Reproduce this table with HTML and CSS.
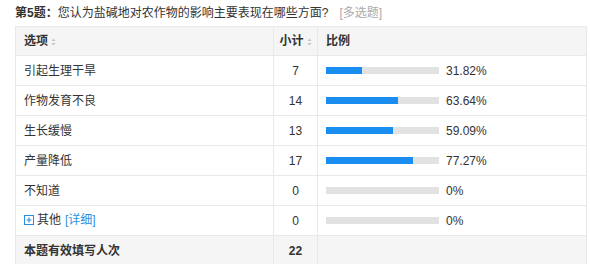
FILE: index.html
```html
<!DOCTYPE html>
<html lang="zh">
<head>
<meta charset="utf-8">
<link rel="stylesheet" href="styles.css">
</head>
<body>
<div class="q-title"><b>第5题：</b>您认为盐碱地对农作物的影响主要表现在哪些方面?<span class="q-type">[多选题]</span></div>
<table class="stat">
  <colgroup><col class="c1"><col class="c2"><col class="c3"></colgroup>
  <thead>
    <tr>
      <th class="opt">选项<svg class="sort" width="5" height="8" viewBox="0 0 5 8"><path d="M2.5 0.5 L4.5 3 L0.5 3 Z M2.5 7.5 L4.5 5 L0.5 5 Z" fill="#c4c4c4"/></svg></th>
      <th class="num">小计<svg class="sort" width="5" height="8" viewBox="0 0 5 8"><path d="M2.5 0.5 L4.5 3 L0.5 3 Z M2.5 7.5 L4.5 5 L0.5 5 Z" fill="#c4c4c4"/></svg></th>
      <th class="ratio">比例</th>
    </tr>
  </thead>
  <tbody>
    <tr><td class="opt">引起生理干旱</td><td class="num">7</td><td class="ratio"><div class="bar-wrap"><div class="bar"><div class="fill" style="width:31.82%"></div></div><span class="pct">31.82%</span></div></td></tr>
    <tr><td class="opt">作物发育不良</td><td class="num">14</td><td class="ratio"><div class="bar-wrap"><div class="bar"><div class="fill" style="width:63.64%"></div></div><span class="pct">63.64%</span></div></td></tr>
    <tr><td class="opt">生长缓慢</td><td class="num">13</td><td class="ratio"><div class="bar-wrap"><div class="bar"><div class="fill" style="width:59.09%"></div></div><span class="pct">59.09%</span></div></td></tr>
    <tr><td class="opt">产量降低</td><td class="num">17</td><td class="ratio"><div class="bar-wrap"><div class="bar"><div class="fill" style="width:77.27%"></div></div><span class="pct">77.27%</span></div></td></tr>
    <tr><td class="opt">不知道</td><td class="num">0</td><td class="ratio"><div class="bar-wrap"><div class="bar"><div class="fill" style="width:0%"></div></div><span class="pct">0%</span></div></td></tr>
    <tr><td class="opt"><span class="other"><svg class="plus" width="10" height="10" viewBox="0 0 10 10"><rect x="0.5" y="0.5" width="9" height="9" fill="none" stroke="#2b8fe0"/><path d="M2.5 5 H7.5 M5 2.5 V7.5" stroke="#2b8fe0" stroke-width="1.2"/></svg>其他<a class="detail">[详细]</a></span></td><td class="num">0</td><td class="ratio"><div class="bar-wrap"><div class="bar"><div class="fill" style="width:0%"></div></div><span class="pct">0%</span></div></td></tr>
  </tbody>
  <tfoot>
    <tr class="total"><td class="opt">本题有效填写人次</td><td class="num">22</td><td class="ratio"></td></tr>
  </tfoot>
</table>
</body>
</html>
```

FILE: styles.css
```css
html, body {
  margin: 0;
  padding: 0;
  background: #fff;
}
body {
  padding: 3px 5px 0 15px;
  font-family: "Liberation Sans", "Noto Sans CJK SC", sans-serif;
  font-size: 12px;
  color: #333;
}
.q-title {
  height: 20px;
  line-height: 20px;
  font-size: 12px;
  color: #333;
  white-space: nowrap;
}
.q-title b {
  font-weight: bold;
}
.q-type {
  color: #aaa;
  margin-left: 11px;
}
.stat {
  margin-top: 3px;
  border-collapse: collapse;
  width: 571px;
  table-layout: fixed;
}
.stat col.c1 { width: 258px; }
.stat col.c2 { width: 44px; }
.stat col.c3 { width: 269px; }
.stat th, .stat td {
  border: 1px solid #e9e9e9;
  height: 30px;
  padding: 0 8px;
  box-sizing: border-box;
  font-size: 12px;
  line-height: 14px;
  vertical-align: middle;
}
.stat thead th {
  height: 29px;
  background: #f5f5f5;
  font-weight: bold;
  color: #333;
  text-align: left;
}
.stat th.num, .stat td.num {
  text-align: center;
  padding: 0;
}
.sort {
  margin-left: 3px;
  vertical-align: -1px;
}
.bar-wrap {
  display: flex;
  align-items: center;
  gap: 7px;
}
.bar {
  width: 113px;
  height: 7px;
  background: #e2e2e2;
  flex: none;
}
.fill {
  height: 100%;
  background: #1a8ef0;
}
.pct {
  color: #333;
}
.other {
  display: inline-flex;
  align-items: center;
}
.plus {
  margin-right: 3px;
}
.detail {
  color: #2b8fe0;
  margin-left: 4px;
}
.total td {
  background: #f5f5f5;
  font-weight: bold;
}
```
